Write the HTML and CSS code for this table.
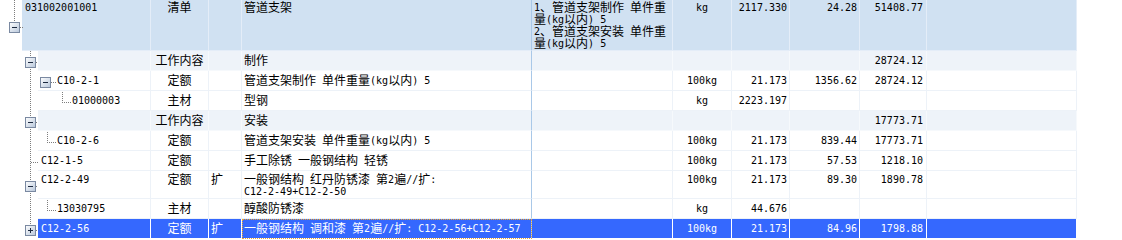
FILE: index.html
```html
<!DOCTYPE html>
<html lang="zh-CN">
<head>
<meta charset="utf-8">
<title>清单</title>
<link rel="stylesheet" href="styles.css">
</head>
<body>
<div class="sheet">
  <div class="row hd">
    <div class="gut"></div>
    <div class="c code"><span class="l">031002001001</span></div>
    <div class="c type">清单</div>
    <div class="c ext"></div>
    <div class="c name">管道支架</div>
    <div class="c desc"><span class="ln"><span class="l">1</span>、管道支架制作<span class="l"> </span>单件重</span><span class="ln">量<span class="l">(kg</span>以内<span class="l">) 5</span></span><span class="ln"><span class="l">2</span>、管道支架安装<span class="l"> </span>单件重</span><span class="ln">量<span class="l">(kg</span>以内<span class="l">) 5</span></span></div>
    <div class="c unit"><span class="l">kg</span></div>
    <div class="c qty"><span class="l">2117.330</span></div>
    <div class="c price"><span class="l">24.28</span></div>
    <div class="c tot"><span class="l">51408.77</span></div>
    <div class="c rest"></div>
  </div>
  <div class="row cat">
    <div class="gut"></div>
    <div class="c code"></div>
    <div class="c type">工作内容</div>
    <div class="c ext"></div>
    <div class="c name">制作</div>
    <div class="c desc"></div>
    <div class="c unit"></div>
    <div class="c qty"></div>
    <div class="c price"></div>
    <div class="c tot"><span class="l">28724.12</span></div>
    <div class="c rest"></div>
  </div>
  <div class="row">
    <div class="gut"></div>
    <div class="c code i1"><span class="l">C10-2-1</span></div>
    <div class="c type">定额</div>
    <div class="c ext"></div>
    <div class="c name">管道支架制作<span class="l"> </span>单件重量<span class="l">(kg</span>以内<span class="l">) 5</span></div>
    <div class="c desc"></div>
    <div class="c unit"><span class="l">100kg</span></div>
    <div class="c qty"><span class="l">21.173</span></div>
    <div class="c price"><span class="l">1356.62</span></div>
    <div class="c tot"><span class="l">28724.12</span></div>
    <div class="c rest"></div>
  </div>
  <div class="row">
    <div class="gut"></div>
    <div class="c code i2"><span class="l">01000003</span></div>
    <div class="c type">主材</div>
    <div class="c ext"></div>
    <div class="c name">型钢</div>
    <div class="c desc"></div>
    <div class="c unit"><span class="l">kg</span></div>
    <div class="c qty"><span class="l">2223.197</span></div>
    <div class="c price"></div>
    <div class="c tot"></div>
    <div class="c rest"></div>
  </div>
  <div class="row cat">
    <div class="gut"></div>
    <div class="c code"></div>
    <div class="c type">工作内容</div>
    <div class="c ext"></div>
    <div class="c name">安装</div>
    <div class="c desc"></div>
    <div class="c unit"></div>
    <div class="c qty"></div>
    <div class="c price"></div>
    <div class="c tot"><span class="l">17773.71</span></div>
    <div class="c rest"></div>
  </div>
  <div class="row">
    <div class="gut"></div>
    <div class="c code i1"><span class="l">C10-2-6</span></div>
    <div class="c type">定额</div>
    <div class="c ext"></div>
    <div class="c name">管道支架安装<span class="l"> </span>单件重量<span class="l">(kg</span>以内<span class="l">) 5</span></div>
    <div class="c desc"></div>
    <div class="c unit"><span class="l">100kg</span></div>
    <div class="c qty"><span class="l">21.173</span></div>
    <div class="c price"><span class="l">839.44</span></div>
    <div class="c tot"><span class="l">17773.71</span></div>
    <div class="c rest"></div>
  </div>
  <div class="row">
    <div class="gut"></div>
    <div class="c code"><span class="l">C12-1-5</span></div>
    <div class="c type">定额</div>
    <div class="c ext"></div>
    <div class="c name">手工除锈<span class="l"> </span>一般钢结构<span class="l"> </span>轻锈</div>
    <div class="c desc"></div>
    <div class="c unit"><span class="l">100kg</span></div>
    <div class="c qty"><span class="l">21.173</span></div>
    <div class="c price"><span class="l">57.53</span></div>
    <div class="c tot"><span class="l">1218.10</span></div>
    <div class="c rest"></div>
  </div>
  <div class="row tall">
    <div class="gut"></div>
    <div class="c code"><span class="l">C12-2-49</span></div>
    <div class="c type">定额</div>
    <div class="c ext">扩</div>
    <div class="c name"><span class="ln">一般钢结构<span class="l"> </span>红丹防锈漆<span class="l"> </span>第<span class="l">2</span>遍<span class="l">//</span>扩<span class="l">:</span></span><span class="ln"><span class="l">C12-2-49+C12-2-50</span></span></div>
    <div class="c desc"></div>
    <div class="c unit"><span class="l">100kg</span></div>
    <div class="c qty"><span class="l">21.173</span></div>
    <div class="c price"><span class="l">89.30</span></div>
    <div class="c tot"><span class="l">1890.78</span></div>
    <div class="c rest"></div>
  </div>
  <div class="row">
    <div class="gut"></div>
    <div class="c code i1"><span class="l">13030795</span></div>
    <div class="c type">主材</div>
    <div class="c ext"></div>
    <div class="c name">醇酸防锈漆</div>
    <div class="c desc"></div>
    <div class="c unit"><span class="l">kg</span></div>
    <div class="c qty"><span class="l">44.676</span></div>
    <div class="c price"></div>
    <div class="c tot"></div>
    <div class="c rest"></div>
  </div>
  <div class="row sel">
    <div class="gut"></div>
    <div class="c code"><span class="l">C12-2-56</span></div>
    <div class="c type">定额</div>
    <div class="c ext">扩</div>
    <div class="c name">一般钢结构<span class="l"> </span>调和漆<span class="l"> </span>第<span class="l">2</span>遍<span class="l">//</span>扩<span class="l">: C12-2-56+C12-2-57</span></div>
    <div class="c desc"></div>
    <div class="c unit"><span class="l">100kg</span></div>
    <div class="c qty"><span class="l">21.173</span></div>
    <div class="c price"><span class="l">84.96</span></div>
    <div class="c tot"><span class="l">1798.88</span></div>
    <div class="c rest"></div>
  </div>

  <svg class="tree" width="80" height="240" viewBox="0 0 80 240" aria-hidden="true">
    <defs>
      <linearGradient id="bx" x1="0" y1="0" x2="1" y2="1">
        <stop offset="0" stop-color="#ffffff"/>
        <stop offset="1" stop-color="#b7c6da"/>
      </linearGradient>
    </defs>
    <g stroke="#7d7d7d" stroke-width="1" stroke-dasharray="1 1" shape-rendering="crispEdges" fill="none">
      <line x1="14.5" y1="0" x2="14.5" y2="22"/>
      <line x1="20" y1="27.5" x2="23" y2="27.5"/>
      <line x1="30.5" y1="51" x2="30.5" y2="226"/>
      <line x1="36" y1="62.5" x2="38" y2="62.5"/>
      <line x1="36" y1="122.5" x2="38" y2="122.5"/>
      <line x1="31" y1="162.5" x2="38" y2="162.5"/>
      <line x1="36" y1="186.5" x2="38" y2="186.5"/>
      <line x1="36" y1="230.5" x2="38" y2="230.5"/>
      <line x1="51" y1="82.5" x2="56" y2="82.5"/>
      <line x1="62.5" y1="92" x2="62.5" y2="102"/>
      <line x1="62" y1="102.5" x2="71" y2="102.5"/>
      <line x1="47.5" y1="132" x2="47.5" y2="142"/>
      <line x1="47" y1="142.5" x2="56" y2="142.5"/>
      <line x1="47.5" y1="200" x2="47.5" y2="210"/>
      <line x1="47" y1="210.5" x2="56" y2="210.5"/>
    </g>
    <g fill="url(#bx)" stroke="#7a89a1" shape-rendering="crispEdges">
      <rect x="9.5" y="22.5" width="10" height="10"/>
      <rect x="25.5" y="57.5" width="10" height="10"/>
      <rect x="40.5" y="77.5" width="10" height="10"/>
      <rect x="25.5" y="117.5" width="10" height="10"/>
      <rect x="25.5" y="181.5" width="10" height="10"/>
      <rect x="25.5" y="225.5" width="10" height="10"/>
    </g>
    <g stroke="#1d2a40" shape-rendering="crispEdges">
      <line x1="12" y1="27.5" x2="17" y2="27.5"/>
      <line x1="28" y1="62.5" x2="33" y2="62.5"/>
      <line x1="43" y1="82.5" x2="48" y2="82.5"/>
      <line x1="28" y1="122.5" x2="33" y2="122.5"/>
      <line x1="28" y1="186.5" x2="33" y2="186.5"/>
      <line x1="28" y1="230.5" x2="33" y2="230.5"/>
      <line x1="30.5" y1="228" x2="30.5" y2="233"/>
    </g>
  </svg>
</div>
</body>
</html>
```

FILE: styles.css
```css
* {
  box-sizing: border-box;
}

body {
  margin: 0;
  background: #ffffff;
  font-family: "Noto Sans CJK SC", "Noto Sans CJK JP", sans-serif;
  font-size: 12px;
  color: #000000;
}

.sheet {
  position: relative;
  width: 1122px;
  height: 240px;
  overflow: hidden;
}

.row {
  display: flex;
  height: 20px;
}

.row.hd {
  height: 51px;
}

.row.tall {
  height: 28px;
}

.gut {
  flex: none;
  width: 38px;
}

.hd .gut {
  width: 22px;
}

.c {
  flex: none;
  height: 100%;
  border-right: 1px solid #edf2f8;
  border-bottom: 1px solid #edf2f8;
  padding: 3px 2px 0 2px;
  line-height: 12px;
  white-space: nowrap;
}

.ln {
  display: block;
  height: 12px;
}

.hd .c {
  background: #d0e1f2;
  border-color: #e4edf8;
  padding-top: 1px;
}

.cat .c {
  background: #eef3f9;
  border-color: #f6f9fc;
}

.tall .c {
  padding-top: 2px;
}

.sel .c {
  background: #3568fe;
  color: #ffffff;
  border-color: #ffffff;
}

.code {
  width: 113px;
  padding-left: 3px;
}

.hd .code {
  width: 129px;
}

.code.i1 {
  padding-left: 19px;
}

.code.i2 {
  padding-left: 34px;
}

.type {
  width: 58px;
  text-align: center;
}

.ext {
  width: 33px;
}

.name {
  width: 290px;
}

.row .name {
  border-right-color: #a9c8e8;
}

.sel .name {
  outline: 1px dotted #f0a830;
  outline-offset: -1px;
}

.desc {
  width: 141px;
}

.unit {
  width: 59px;
  text-align: center;
}

.qty {
  width: 58px;
  text-align: right;
}

.price {
  width: 70px;
  text-align: right;
}

.tot {
  width: 67px;
  text-align: right;
  padding-right: 3px;
}

.rest {
  width: 150px;
}

.l {
  font-family: "DejaVu Sans Mono", monospace;
  font-size: 10px;
  line-height: 0;
  vertical-align: 1px;
}

.tree {
  position: absolute;
  left: 0;
  top: 0;
}
```
